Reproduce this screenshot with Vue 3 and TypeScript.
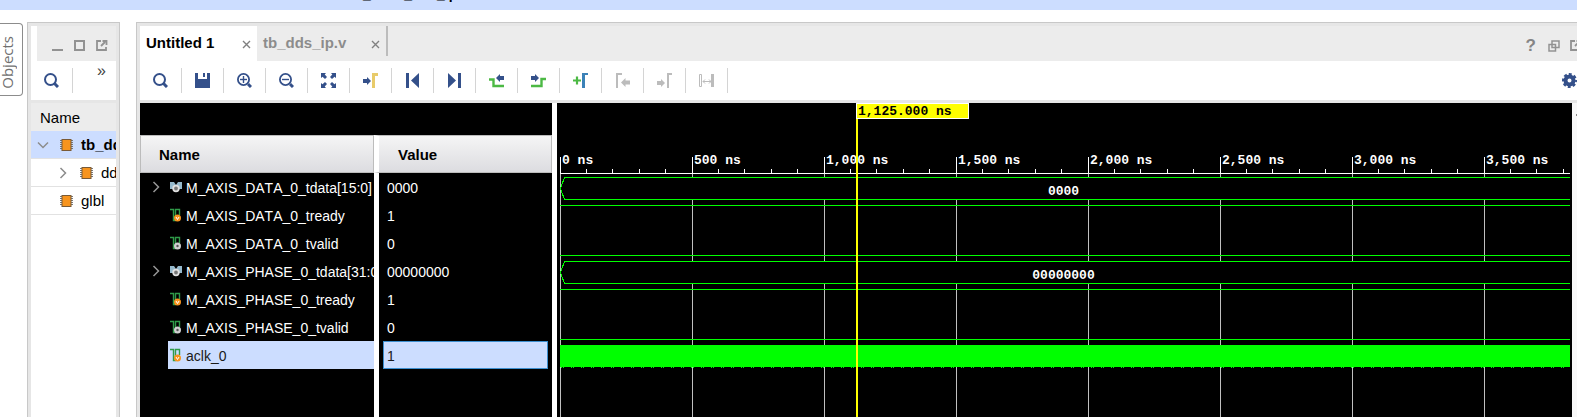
<script setup lang="ts">
interface Signal {
  name: string
  value: string
  kind: 'bus' | 'in' | 'out'
  selected?: boolean
}

interface TreeRow {
  label: string
  depth: number
  toggle: '' | 'open' | 'closed'
  selected?: boolean
}

const tree: TreeRow[] = [
  { label: 'tb_dds_ip', depth: 0, toggle: 'open', selected: true },
  { label: 'dds_ip', depth: 1, toggle: 'closed' },
  { label: 'glbl', depth: 0, toggle: '' },
]

const signals: Signal[] = [
  { name: 'M_AXIS_DATA_0_tdata[15:0]', value: '0000', kind: 'bus' },
  { name: 'M_AXIS_DATA_0_tready', value: '1', kind: 'in' },
  { name: 'M_AXIS_DATA_0_tvalid', value: '0', kind: 'out' },
  { name: 'M_AXIS_PHASE_0_tdata[31:0]', value: '00000000', kind: 'bus' },
  { name: 'M_AXIS_PHASE_0_tready', value: '1', kind: 'in' },
  { name: 'M_AXIS_PHASE_0_tvalid', value: '0', kind: 'out' },
  { name: 'aclk_0', value: '1', kind: 'in', selected: true },
]

const tools = [
  { id: 'search', label: 'Search' },
  { id: 'save', label: 'Save' },
  { id: 'zoomin', label: 'Zoom in' },
  { id: 'zoomout', label: 'Zoom out' },
  { id: 'fit', label: 'Zoom fit' },
  { id: 'cursor', label: 'Go to cursor' },
  { id: 'first', label: 'Go to start' },
  { id: 'last', label: 'Go to end' },
  { id: 'prev', label: 'Previous transition' },
  { id: 'next', label: 'Next transition' },
  { id: 'addmark', label: 'Add marker' },
  { id: 'prevmark', label: 'Previous marker', disabled: true },
  { id: 'nextmark', label: 'Next marker', disabled: true },
  { id: 'swap', label: 'Swap cursors', disabled: true },
]

// Time scale of the waveform: 500 ns spans 132 px.
const origin = 3
const timeX = (ns: number): number => origin + Math.floor(ns * 0.264)
const majors = Array.from({ length: 8 }, (_, i) => i * 500)
const minors = Array.from({ length: 39 }, (_, i) => i * 100).filter((t) => t % 500 !== 0)
const cursorNs = 1125
const cursorX = timeX(cursorNs)
const ROW = 28
const FIRST_ROW = 70
const rowTop = (i: number): number => FIRST_ROW + i * ROW
</script>

<template>
  <div class="app">
    <header class="titlebar"><span>sim_1 - tb_dds_ip</span></header>
    <div class="workspace">
      <nav class="rail">
        <button class="rail-tab" type="button"><span>Objects</span></button>
      </nav>

      <section class="panel scope">
        <div class="scope-head">
          <button type="button" aria-label="Minimize">
            <svg width="12" height="12"><path d="M0 10h11" stroke="#929292" stroke-width="2" /></svg>
          </button>
          <button type="button" aria-label="Maximize">
            <svg width="12" height="12"><rect x="1" y="1" width="9" height="9" fill="none" stroke="#929292" stroke-width="2" /></svg>
          </button>
          <button type="button" aria-label="Float">
            <svg width="12" height="12"><path d="M5 1H1V10H10V7M5 6l4-4M6.500 1H10.500V5" fill="none" stroke="#929292" stroke-width="1.800" /></svg>
          </button>
        </div>
        <div class="scope-tools">
          <button class="tool" type="button" aria-label="Search">
            <svg width="15" height="15"><circle cx="6.500" cy="6.500" r="5.500" fill="none" stroke="#34508a" stroke-width="2" /><path d="M10.500 10.500L14 14" stroke="#34508a" stroke-width="3" /></svg>
          </button>
          <button class="more" type="button">»</button>
        </div>
        <div class="scope-name">Name</div>
        <ul class="tree">
          <li v-for="row in tree" :key="row.label" :class="['tree-row', { picked: row.selected, nested: row.depth }]">
            <span class="twisty">
              <svg v-if="row.toggle === 'open'" width="12" height="12"><path d="M1 3.500L6 8.500L11 3.500" fill="none" stroke="#8c8c8c" stroke-width="1.500" /></svg>
              <svg v-if="row.toggle === 'closed'" width="12" height="12"><path d="M3.500 1L8.500 6L3.500 11" fill="none" stroke="#8c8c8c" stroke-width="1.500" /></svg>
            </span>
            <svg class="chip" width="13" height="12">
              <path d="M0 1.500H13M0 3.500H13M0 5.500H13M0 7.500H13M0 9.500H13" stroke="#777" stroke-width="1" />
              <rect x="2" y="0.500" width="9" height="11" fill="#f7941e" stroke="#7a5a35" />
            </svg>
            <span>{{ row.label }}</span>
          </li>
        </ul>
      </section>

      <section class="panel wave">
        <div class="tabs">
          <div class="tab active"><span>Untitled 1</span>
            <button type="button" aria-label="Close Untitled 1"><svg width="9" height="9"><path d="M1 1L8 8M8 1L1 8" stroke="#808080" stroke-width="1.400" /></svg></button>
          </div>
          <div class="tab"><span>tb_dds_ip.v</span>
            <button type="button" aria-label="Close tb_dds_ip.v"><svg width="9" height="9"><path d="M1 1L8 8M8 1L1 8" stroke="#808080" stroke-width="1.400" /></svg></button>
          </div>
          <i class="tab-end"></i>
          <div class="window-actions">
            <button class="help" type="button" aria-label="Help">?</button>
            <button type="button" aria-label="Restore">
              <svg width="12" height="12"><path d="M4 1h7v6.500H4zM1 4.500h6.500v6.500H1z" fill="none" stroke="#929292" stroke-width="1.500" /></svg>
            </button>
            <button type="button" aria-label="Float">
              <svg width="12" height="12"><path d="M5 1H1V10H10V7M5 6l4-4M6.500 1H10.500V5" fill="none" stroke="#929292" stroke-width="1.800" /></svg>
            </button>
          </div>
        </div>

        <div class="toolbar">
          <button v-for="t in tools" :key="t.id" class="tool" type="button" :aria-label="t.label" :disabled="t.disabled">
            <svg width="15" height="15" fill="none" stroke="#34508a">
              <g v-if="t.id === 'search'"><circle cx="6.500" cy="6.500" r="5.500" stroke-width="2" /><path d="M10.500 10.500L14 14" stroke-width="3" /></g>
              <path v-if="t.id === 'save'" d="M0 0H3V6H12V0H15V15H0ZM8 0H10V4H8Z" fill="#34508a" stroke="none" />
              <g v-if="t.id === 'zoomin' || t.id === 'zoomout'">
                <circle cx="6.500" cy="6.500" r="5.600" stroke-width="1.800" /><path d="M11 11L14 14" stroke-width="3" /><path d="M3 6.500h7" stroke-width="1.400" />
                <path v-if="t.id === 'zoomin'" d="M6.500 3v7" stroke-width="1.400" />
              </g>
              <path v-if="t.id === 'fit'" d="M0 0H5L3.700 1.500L6 4L4 6L1.500 3.700L0 5ZM15 0V5L13.500 3.700L11 6L9 4L11.300 1.500L10 0ZM0 15V10L1.500 11.300L4 9L6 11L3.700 13.500L5 15ZM15 15H10L11.300 13.500L9 11L11 9L13.500 11.300L15 10Z" fill="#34508a" stroke="none" />
              <g v-if="t.id === 'cursor'" stroke="none"><path d="M0 6H4V4L8 8L4 12V10H0Z" fill="#34508a" /><path d="M9 0H15V3H12V15H9Z" fill="#e8cb6a" /></g>
              <path v-if="t.id === 'first'" d="M1 0H4V15H1ZM14 0V15L6 7.500Z" fill="#34508a" stroke="none" />
              <path v-if="t.id === 'last'" d="M14 0H11V15H14ZM1 0V15L9 7.500Z" fill="#34508a" stroke="none" />
              <g v-if="t.id === 'prev'"><path d="M0 6.500H4.500V13H15" stroke="#4cb944" stroke-width="2.400" /><path d="M15 3H11V1L7 5L11 9V7H15Z" fill="#34508a" stroke="none" /></g>
              <g v-if="t.id === 'next'"><path d="M0 13H10.500V6H15" stroke="#4cb944" stroke-width="2.400" /><path d="M0 3H4V1L8 5L4 9V7H0Z" fill="#34508a" stroke="none" /></g>
              <g v-if="t.id === 'addmark'"><path d="M0 7.500H8M4 3.500V11.500" stroke="#4cb944" stroke-width="2.200" /><path d="M9 0H15V2H12V15H9Z" fill="#3b82b8" stroke="none" /></g>
              <path v-if="t.id === 'prevmark'" d="M1 0H7V2H3V15H1ZM15 7.500H10.500V5L6 9.500L10.500 14V11.500H15Z" fill="#bcbcbc" stroke="none" />
              <path v-if="t.id === 'nextmark'" d="M10 0H15V2H12V15H10ZM0 8H4V6L8 10L4 14V12H0Z" fill="#bcbcbc" stroke="none" />
              <g v-if="t.id === 'swap'" stroke="#bcbcbc"><path d="M0.500 1.500H2.500V13.500H0.500ZM4 8.500H12M6 6.500L4 8.500L6 10.500M10 6.500L12 8.500L10 10.500" /><path d="M13.500 1V14" stroke-width="3" /></g>
            </svg>
          </button>
          <button class="gear" type="button" aria-label="Settings">
            <svg width="15" height="15"><circle cx="7.500" cy="7.500" r="4" fill="none" stroke="#34508a" stroke-width="4" /><circle cx="7.500" cy="7.500" r="6.200" fill="none" stroke="#34508a" stroke-width="2.600" stroke-dasharray="2.870 2" stroke-dashoffset="1.435" /></svg>
          </button>
        </div>

        <div class="viewer">
          <div class="lists">
            <table>
              <colgroup><col class="name-col" /><col /></colgroup>
              <thead><tr><th>Name</th><th class="split">Value</th></tr></thead>
              <tbody>
                <tr v-for="s in signals" :key="s.name" :class="{ picked: s.selected }">
                  <td>
                    <div class="signal">
                      <span class="expand"><svg v-if="s.kind === 'bus'" width="8" height="12"><path d="M1.500 1L6.500 6L1.500 11" fill="none" stroke="#969696" stroke-width="1.500" /></svg></span>
                      <span class="signal-label">
                        <svg width="14" height="14">
                          <template v-if="s.kind === 'bus'">
                            <path d="M1 2H5L7 5L9 2H13V9H1Z" fill="#96b9cc" />
                            <circle cx="7" cy="8.500" r="2.800" fill="#777" stroke="#e0e0e0" stroke-width="1.800" />
                          </template>
                          <template v-else>
                            <path d="M1 1.500H4.500V12.500H6.500V1.500H10.500V7" fill="none" stroke="#2f9a48" stroke-width="1.400" />
                            <circle cx="8.500" cy="10" r="3.500" :class="['port', s.kind]" />
                            <path v-if="s.kind === 'in'" d="M7 9L8.500 11.500L10 9" fill="none" stroke="#fff" />
                            <circle v-else cx="8.500" cy="10" r="1.200" fill="#555" />
                          </template>
                        </svg>
                        <span>{{ s.name }}</span>
                      </span>
                    </div>
                  </td>
                  <td class="split"><div class="value">{{ s.value }}</div></td>
                </tr>
              </tbody>
            </table>
          </div>

          <div class="canvas">
            <svg class="plot" role="img" aria-label="Waveform" shape-rendering="crispEdges">
              <!-- grid and ruler -->
              <g fill="#c0c0c0">
                <rect v-for="t in majors" :key="t" :x="timeX(t)" y="70" width="1" height="100%" />
              </g>
              <g fill="#fff">
                <rect x="3" y="70" width="100%" height="1" />
                <rect v-for="t in majors" :key="t" :x="timeX(t)" y="54" width="1" height="17" />
                <rect v-for="t in minors" :key="t" :x="timeX(t)" y="66" width="1" height="4" />
                <text v-for="t in majors" :key="'l' + t" :x="timeX(t) + 2" y="61">{{ t.toLocaleString('en-US') }} ns</text>
              </g>
              <!-- traces -->
              <g v-for="(s, i) in signals" :key="s.name" fill="#00ff00">
                <template v-if="s.kind === 'bus'">
                  <rect x="4" :y="rowTop(i) + 4" width="100%" height="23" fill="#000" />
                  <rect x="7" :y="rowTop(i) + 4" width="100%" height="1" />
                  <rect x="7" :y="rowTop(i) + 26" width="100%" height="1" />
                  <polyline :points="`7.5,${rowTop(i) + 4.5} 3.5,${rowTop(i) + 15.5} 7.5,${rowTop(i) + 26.5}`" fill="none" stroke="#00ff00" />
                  <text class="bus-text" x="50%" :y="rowTop(i) + 22" fill="#fff">{{ s.value }}</text>
                </template>
                <template v-else-if="s.name === 'aclk_0'">
                  <rect x="3" :y="rowTop(i) + 4" width="100%" height="22" />
                  <line x1="4" :y1="rowTop(i) + 26.500" x2="100%" :y2="rowTop(i) + 26.500" stroke="#00ff00" stroke-dasharray="1 1 1 7" />
                </template>
                <rect v-else x="3" :y="rowTop(i) + (s.value === '1' ? 4 : 26)" width="100%" height="1" />
              </g>
              <!-- time cursor -->
              <rect :x="cursorX - 1" y="0" width="2" height="100%" fill="#ffff00" />
              <rect :x="cursorX - 1" y="0" width="113" height="16" fill="#fff" />
              <rect :x="cursorX" y="1" width="111" height="14" fill="#ffff00" />
              <text :x="cursorX + 1" y="12" fill="#000">1,125.000 ns</text>
            </svg>
          </div>
          <div class="scroll"><i></i></div>
        </div>
      </section>
    </div>
  </div>
</template>

<style>
body { margin: 0; overflow: hidden; }
</style>

<style scoped>
.app {
  display: flex;
  flex-direction: column;
  height: 100vh;
  background: #fff;
  color: #000;
  font: 15px/20px "Liberation Sans", Arial, sans-serif;
}
button {
  display: flex;
  padding: 0;
  border: 0;
  background: none;
  color: inherit;
  font: inherit;
}
svg { display: block; flex: none; }
.titlebar {
  display: flex;
  flex: none;
  align-items: flex-end;
  height: 10px;
  padding: 0 0 8px 339px;
  box-sizing: border-box;
  overflow: hidden;
  background: #ccddff;
  font-size: 14px;
  font-weight: bold;
  line-height: 16px;
}
.workspace { display: flex; flex: 1; min-height: 0; padding-top: 12px; }
.rail { flex: none; width: 27px; padding-top: 1px; }
.rail-tab {
  align-items: center;
  width: 23px;
  height: 73px;
  box-sizing: border-box;
  border: 1px solid #8c8c8c;
  border-left: 0;
  border-radius: 0 4px 4px 0;
  padding-top: 6px;
  color: #707070;
  font: 15px/15px "Open Sans", sans-serif;
}
.rail-tab span { writing-mode: vertical-rl; transform: rotate(180deg); }
.panel {
  display: flex;
  flex-direction: column;
  box-sizing: border-box;
  border: 1px solid #c8c8c8;
  border-bottom: 0;
  box-shadow: inset 3px 3px 0 #e6e6e6, inset -3px 0 0 #e6e6e6;
  padding: 3px 3px 0;
}
.scope { flex: none; width: 93px; margin-right: 16px; overflow: hidden; }
.scope-head {
  display: flex;
  align-items: center;
  gap: 10px;
  height: 35px;
  margin-left: 6px;
  padding: 4px 0 0 15px;
  box-sizing: border-box;
  background: #ececec;
}
.scope-tools { display: flex; height: 39px; background: #fff; }
.tool {
  flex: none;
  align-items: center;
  justify-content: center;
  width: 42px;
  height: 25px;
  margin-top: 7px;
  border-right: 1px solid #d4d4d4;
}
.more { align-self: flex-start; margin: 0 0 0 24px; color: #444; font-size: 16px; }
.scope-name {
  height: 28px;
  padding-left: 9px;
  border-top: 3px solid #e6e6e6;
  background: #ececec;
  line-height: 29px;
}
.tree { margin: 0; padding: 0; list-style: none; overflow: hidden; background: #fff; }
.tree-row {
  display: flex;
  align-items: center;
  height: 27px;
  border-bottom: 1px solid #e2e2e2;
  padding-left: 6px;
  white-space: nowrap;
}
.tree-row.nested { padding-left: 26px; }
.tree-row.picked { background: #ccddff; font-weight: bold; }
.twisty { flex: none; width: 23px; }
.chip { margin-right: 8px; }
.wave { flex: 1; min-width: 0; border-right: 0; padding-right: 0; box-shadow: inset 3px 3px 0 #e6e6e6; overflow: hidden; }
.tabs { display: flex; height: 35px; background: #ececec; }
.tab {
  display: flex;
  align-items: center;
  justify-content: space-between;
  width: 129px;
  padding: 0 6px 2px;
  box-sizing: border-box;
  color: #8c8c8c;
  font-weight: bold;
}
.tab.active { width: 117px; background: #fff; color: #000; }
.tab button { margin-top: 3px; }
.tab-end { width: 2px; height: 30px; background: #bcbcbc; }
.window-actions {
  display: flex;
  align-items: center;
  gap: 10px;
  margin: 4px -5px 0 auto;
}
.help { margin-right: 2px; color: #858585; font-size: 17px; font-weight: bold; }
.toolbar {
  display: flex;
  height: 39px;
  border-bottom: 3px solid #e6e6e6;
  background: #fff;
}
.gear { align-items: center; height: 39px; margin-left: auto; }
.viewer { display: flex; flex: 1; min-height: 0; background: #000; }
.lists {
  flex: none;
  width: 412px;
  margin-top: 32px;
  background: linear-gradient(to right, #000 234px, #fff 234px, #fff 239px, #000 239px);
}
table { width: 100%; table-layout: fixed; border-spacing: 0; color: #fff; }
.name-col { width: 234px; }
th, td { padding: 0; overflow: hidden; text-align: left; }
th {
  height: 34px;
  border: 1px solid #bcbcbc;
  padding: 2px 0 0 18px;
  background: linear-gradient(#f5f5f5, #dcdce0);
  color: #000;
}
th.split { border-left: 5px solid #fff; padding-left: 19px; background-clip: padding-box; }
td { font-size: 14px; font-kerning: none; }
td.split { border-left: 5px solid #fff; }
.signal { display: flex; height: 28px; }
.expand { display: flex; align-items: center; flex: none; width: 16px; padding-left: 12px; }
.signal-label {
  display: flex;
  flex: 1;
  align-items: center;
  gap: 3px;
  min-width: 0;
  padding-left: 1px;
  overflow: hidden;
  line-height: 28px;
  white-space: nowrap;
}
.signal-label span { padding-top: 2px; }
.port.in { fill: #f7941e; }
.port.out { fill: #d0d0d0; }
.value {
  height: 26px;
  margin: 0 4px;
  border: 1px solid transparent;
  padding-left: 3px;
  line-height: 28px;
}
.picked .signal-label, .picked .value { background: #ccddff; color: #1a1a1a; }
.picked .value { border-color: #3c8fd0; }
.canvas { flex: 1; min-width: 0; border-left: 5px solid #fff; padding-right: 2px; }
.plot { width: 100%; height: 100%; }
.plot text { font: bold 13px "Liberation Mono", "Courier New", monospace; }
.plot .bus-text { text-anchor: middle; }
.scroll { flex: none; width: 5px; background: #f8f8f8; }
.scroll i { display: block; width: 1px; height: 2px; margin: 11px 0 0 4px; background: #888; }
</style>
